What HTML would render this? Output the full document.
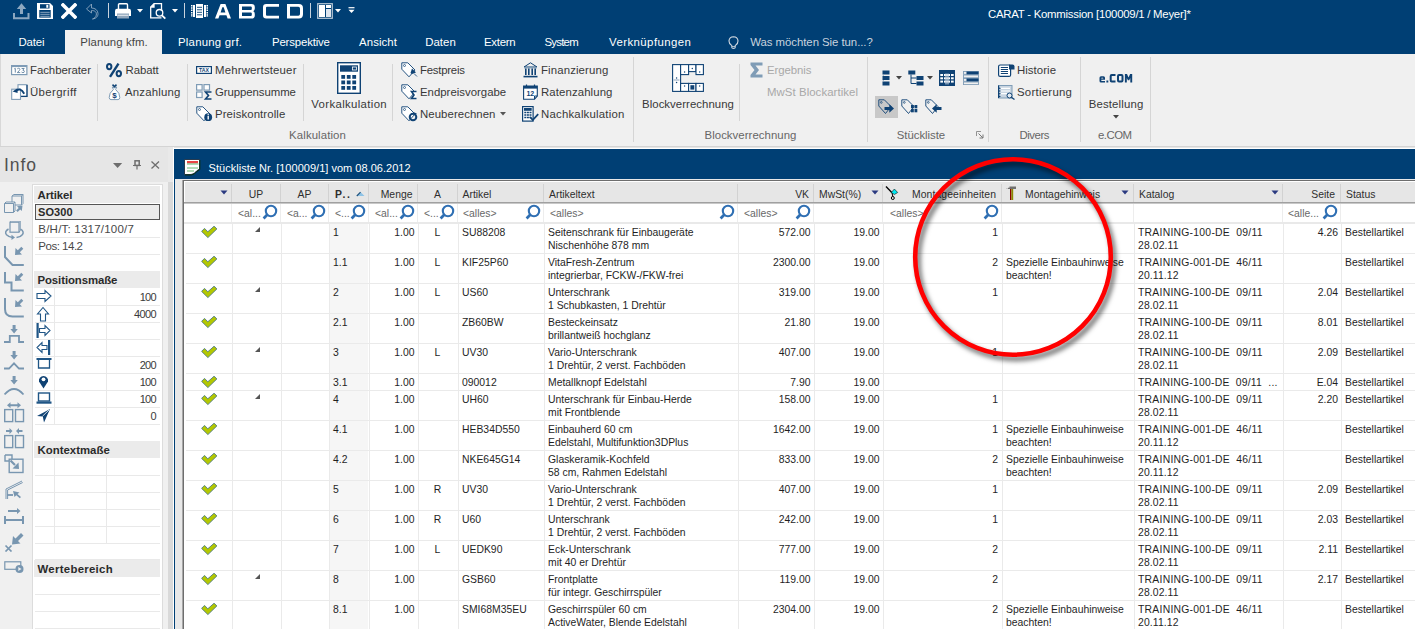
<!DOCTYPE html>
<html><head><meta charset="utf-8"><title>CARAT</title>
<style>
html,body{margin:0;padding:0;width:1415px;height:629px;overflow:hidden;background:#E6E6E6;}
body{position:relative;font-family:"Liberation Sans",sans-serif;}
.t{position:absolute;white-space:pre;line-height:1;}
.r{position:absolute;}
</style></head><body>
<div class="r" style="left:0px;top:0px;width:1415px;height:54px;background:#003F74;"></div>
<div class="t" style="top:9px;font-size:11.4px;color:#FFFFFF;left:988px;letter-spacing:-0.256px;">CARAT - Kommission [100009/1 / Meyer]*</div>
<div class="r" style="left:65px;top:30px;width:97px;height:24px;background:#F0F0F0;"></div>
<div class="t" style="top:37px;font-size:11.4px;color:#FFFFFF;left:18.5px;letter-spacing:-0.153px;">Datei</div>
<div class="t" style="top:37px;font-size:11.4px;color:#444444;left:80.3px;letter-spacing:0.088px;">Planung kfm.</div>
<div class="t" style="top:37px;font-size:11.4px;color:#FFFFFF;left:178px;letter-spacing:0.229px;">Planung grf.</div>
<div class="t" style="top:37px;font-size:11.4px;color:#FFFFFF;left:272px;letter-spacing:-0.156px;">Perspektive</div>
<div class="t" style="top:37px;font-size:11.4px;color:#FFFFFF;left:359px;letter-spacing:0.103px;">Ansicht</div>
<div class="t" style="top:37px;font-size:11.4px;color:#FFFFFF;left:425.2px;letter-spacing:0.045px;">Daten</div>
<div class="t" style="top:37px;font-size:11.4px;color:#FFFFFF;left:484px;letter-spacing:-0.250px;">Extern</div>
<div class="t" style="top:37px;font-size:11.4px;color:#FFFFFF;left:544.5px;letter-spacing:-0.762px;">System</div>
<div class="t" style="top:37px;font-size:11.4px;color:#FFFFFF;left:609px;letter-spacing:0.442px;">Verknüpfungen</div>
<div class="t" style="top:37px;font-size:11.4px;color:#C9D3DE;left:750.3px;letter-spacing:-0.053px;">Was möchten Sie tun...?</div>
<svg class="r" style="left:13px;top:3px;" width="17" height="17" viewBox="0 0 17 17"><path d="M3.8 6 L8.5 0.2 L13.2 6 L10 6 L10 11 L7 11 L7 6 L4 6 Z" fill="#8CA7C0" transform="translate(0,0)"/><path d="M1 10 L1 15.2 L15.5 15.2 L15.5 10" fill="none" stroke="#8CA7C0" stroke-width="2"/></svg>
<svg class="r" style="left:37px;top:3px;" width="16" height="16" viewBox="0 0 16 16"><path d="M0 0 H13 L16 3 V16 H0 Z" fill="#fff"/><rect x="3" y="1.2" width="9.5" height="4.3" fill="#003E73"/><rect x="9.3" y="1.8" width="2" height="3" fill="#fff"/><rect x="2.3" y="7" width="11.4" height="7.6" fill="#003E73"/><path d="M3.3 9.3 H12.7 M3.3 11.3 H12.7 M3.3 13.3 H12.7" stroke="#9DB3C8" stroke-width="0.9"/></svg>
<svg class="r" style="left:61px;top:3px;" width="16" height="16" viewBox="0 0 16 16"><path d="M2 2 L14 14 M14 2 L2 14" stroke="#fff" stroke-width="3.6" stroke-linecap="square"/></svg>
<svg class="r" style="left:85px;top:3px;" width="14" height="17" viewBox="0 0 14 17"><path d="M6.5 1 L1.5 6 L6.5 10 L6.5 7.5 C10 7.5 11.8 9 11.3 12 C10.9 14 9.5 15.3 7.5 16 C11.5 15.5 13.2 13 13 10.5 C12.8 7 10 5 6.5 5 Z" fill="none" stroke="#8CA7C0" stroke-width="0.9"/></svg>
<div class="r" style="left:108px;top:3px;width:1px;height:15px;background:#C8D3DE;"></div>
<div class="r" style="left:184px;top:3px;width:1px;height:15px;background:#C8D3DE;"></div>
<div class="r" style="left:310px;top:3px;width:1px;height:15px;background:#C8D3DE;"></div>
<svg class="r" style="left:115px;top:3px;" width="17" height="16" viewBox="0 0 17 16"><rect x="3.5" y="0.7" width="9" height="7" rx="1" fill="none" stroke="#fff" stroke-width="1.4"/><path d="M0 8 Q0 5.8 2 5.8 H14 Q16 5.8 16 8 V13 H0 Z" fill="#fff"/><rect x="2" y="10.5" width="12" height="5" fill="#8FA6BC"/><path d="M2.5 12.3 H13.5" stroke="#fff" stroke-width="0.8"/></svg>
<svg class="r" style="left:137px;top:9px;" width="6" height="4" viewBox="0 0 6 4"><path d="M0 0 H6 L3 3.5 Z" fill="#fff"/></svg>
<svg class="r" style="left:172px;top:9px;" width="6" height="4" viewBox="0 0 6 4"><path d="M0 0 H6 L3 3.5 Z" fill="#fff"/></svg>
<svg class="r" style="left:335px;top:9px;" width="6" height="4" viewBox="0 0 6 4"><path d="M0 0 H6 L3 3.5 Z" fill="#fff"/></svg>
<svg class="r" style="left:150px;top:3px;" width="17" height="17" viewBox="0 0 17 17"><path d="M4 0.7 H11.5 V8 M11.5 14.8 H0.7 V4 L4 0.7 V4 H0.7" fill="none" stroke="#fff" stroke-width="1.3"/><path d="M0.7 4 L4 0.7 L4 4 Z" fill="#fff"/><circle cx="9.5" cy="9.8" r="3.3" fill="none" stroke="#fff" stroke-width="1.3"/><path d="M12 12.3 L15.3 15.6" stroke="#fff" stroke-width="1.8"/></svg>
<svg class="r" style="left:191px;top:4px;" width="17" height="14" viewBox="0 0 17 14"><rect x="5" y="0" width="7" height="14" fill="#fff"/><path d="M0.7 1 V13" stroke="#fff" stroke-width="1.6" stroke-dasharray="1.5 0.8"/><path d="M16.3 1 V13" stroke="#fff" stroke-width="1.6" stroke-dasharray="1.5 0.8"/><rect x="2" y="1" width="2" height="12" fill="#fff"/><rect x="13" y="1" width="2" height="12" fill="#fff"/><path d="M6 3.3 H11 M6 5.8 H11 M6 8.3 H11 M6 10.8 H11" stroke="#003E73" stroke-width="0.9"/></svg>
<svg class="r" style="left:215.3px;top:3.7px;" width="17" height="16" viewBox="0 0 17 16"><path d="M0 14.5 L5.6 0 H10.4 L16 14.5 H12.6 L11.4 11.3 H4.6 L3.4 14.5 Z M5.6 8.6 H10.4 L8.7 3.2 H7.3 Z" fill="#fff" fill-rule="evenodd"/></svg>
<svg class="r" style="left:239px;top:3.7px;" width="17" height="16" viewBox="0 0 17 16"><path d="M0 0 H12.6 Q15.8 0 15.8 3.1 V4.6 Q15.8 6.5 14.3 7.2 Q15.8 8 15.8 10 V11.4 Q15.8 14.5 12.6 14.5 H0 Z M3 2.6 H11.8 Q12.8 2.6 12.8 3.6 V5 Q12.8 6 11.8 6 H3 Z M3 8.5 H11.8 Q12.8 8.5 12.8 9.5 V10.9 Q12.8 11.9 11.8 11.9 H3 Z" fill="#fff" fill-rule="evenodd"/></svg>
<svg class="r" style="left:263px;top:3.7px;" width="17" height="16" viewBox="0 0 17 16"><path d="M3.2 0 H16 V2.7 H4 Q3 2.7 3 3.7 V10.8 Q3 11.8 4 11.8 H16 V14.5 H3.2 Q0 14.5 0 11.3 V3.2 Q0 0 3.2 0 Z" fill="#fff" fill-rule="evenodd"/></svg>
<svg class="r" style="left:287px;top:3.7px;" width="17" height="16" viewBox="0 0 17 16"><path d="M0 0 H11.8 Q16 0 16 4.2 V10.3 Q16 14.5 11.8 14.5 H0 Z M3 2.7 H11.3 Q13 2.7 13 4.4 V10.1 Q13 11.8 11.3 11.8 H3 Z" fill="#fff" fill-rule="evenodd"/></svg>
<svg class="r" style="left:317px;top:3px;" width="16" height="16" viewBox="0 0 16 16"><rect x="0.7" y="0.7" width="14.6" height="14.6" fill="none" stroke="#B9C8D6" stroke-width="1.2"/><rect x="2" y="2" width="6" height="12" fill="#fff"/><rect x="9" y="2" width="5" height="3" fill="#fff"/><rect x="9" y="6" width="5" height="8" fill="#DDE5EE"/></svg>
<svg class="r" style="left:348px;top:7px;" width="7" height="7" viewBox="0 0 7 7"><path d="M0.5 0.7 H6.5" stroke="#fff" stroke-width="1.2"/><path d="M0.5 2.8 H6.5 L3.5 6 Z" fill="#fff"/></svg>
<div class="r" style="left:0px;top:54px;width:1415px;height:92px;background:#F0F0F0;"></div>
<div class="r" style="left:0px;top:146px;width:1415px;height:1px;background:#D4D4D4;"></div>
<div class="r" style="left:0px;top:54px;width:1px;height:92px;background:#D8D8D8;"></div>
<div class="r" style="left:97px;top:64px;width:1px;height:57px;background:#D5D5D5;"></div>
<div class="r" style="left:187px;top:64px;width:1px;height:57px;background:#D5D5D5;"></div>
<div class="r" style="left:303px;top:64px;width:1px;height:57px;background:#D5D5D5;"></div>
<div class="r" style="left:392px;top:64px;width:1px;height:57px;background:#D5D5D5;"></div>
<div class="r" style="left:739px;top:64px;width:1px;height:57px;background:#D5D5D5;"></div>
<div class="r" style="left:633px;top:57px;width:1px;height:85px;background:#D5D5D5;"></div>
<div class="r" style="left:867px;top:57px;width:1px;height:85px;background:#D5D5D5;"></div>
<div class="r" style="left:988px;top:57px;width:1px;height:85px;background:#D5D5D5;"></div>
<div class="r" style="left:1080px;top:57px;width:1px;height:85px;background:#D5D5D5;"></div>
<div class="r" style="left:1150px;top:57px;width:1px;height:85px;background:#D5D5D5;"></div>
<div class="t" style="top:65px;font-size:11.4px;color:#383838;left:30px;letter-spacing:-0.046px;">Fachberater</div>
<div class="t" style="top:87px;font-size:11.4px;color:#383838;left:30px;letter-spacing:0.362px;">Übergriff</div>
<div class="t" style="top:65px;font-size:11.4px;color:#383838;left:125.5px;letter-spacing:-0.078px;">Rabatt</div>
<div class="t" style="top:87px;font-size:11.4px;color:#383838;left:125px;letter-spacing:0.190px;">Anzahlung</div>
<div class="t" style="top:65px;font-size:11.4px;color:#383838;left:215px;letter-spacing:0.177px;">Mehrwertsteuer</div>
<div class="t" style="top:87px;font-size:11.4px;color:#383838;left:215px;letter-spacing:-0.067px;">Gruppensumme</div>
<div class="t" style="top:109px;font-size:11.4px;color:#383838;left:215px;letter-spacing:0.095px;">Preiskontrolle</div>
<div class="t" style="top:99px;font-size:11.4px;color:#383838;left:49.17008365384618px;width:600px;text-align:center;letter-spacing:0.340px;">Vorkalkulation</div>
<div class="t" style="top:65px;font-size:11.4px;color:#383838;left:420px;letter-spacing:-0.235px;">Festpreis</div>
<div class="t" style="top:87px;font-size:11.4px;color:#383838;left:420px;letter-spacing:0.001px;">Endpreisvorgabe</div>
<div class="t" style="top:109px;font-size:11.4px;color:#383838;left:420px;letter-spacing:0.064px;">Neuberechnen</div>
<div class="t" style="top:65px;font-size:11.4px;color:#383838;left:541px;letter-spacing:0.127px;">Finanzierung</div>
<div class="t" style="top:87px;font-size:11.4px;color:#383838;left:541px;letter-spacing:0.104px;">Ratenzahlung</div>
<div class="t" style="top:109px;font-size:11.4px;color:#383838;left:541px;letter-spacing:0.209px;">Nachkalkulation</div>
<div class="t" style="top:99px;font-size:11.4px;color:#383838;left:388.02497447916664px;width:600px;text-align:center;letter-spacing:0.050px;">Blockverrechnung</div>
<div class="t" style="top:65px;font-size:11.4px;color:#A8A8A8;left:767px;letter-spacing:-0.071px;">Ergebnis</div>
<div class="t" style="top:87px;font-size:11.4px;color:#A8A8A8;left:767px;letter-spacing:0.065px;">MwSt Blockartikel</div>
<div class="t" style="top:65px;font-size:11.4px;color:#383838;left:1017px;letter-spacing:0.051px;">Historie</div>
<div class="t" style="top:87px;font-size:11.4px;color:#383838;left:1017px;letter-spacing:0.267px;">Sortierung</div>
<div class="t" style="top:99px;font-size:11.4px;color:#383838;left:816.0812519097221px;width:600px;text-align:center;letter-spacing:0.163px;">Bestellung</div>
<div class="t" style="top:130px;font-size:11.4px;color:#666666;left:17.551488749999976px;width:600px;text-align:center;letter-spacing:0.103px;">Kalkulation</div>
<div class="t" style="top:130px;font-size:11.4px;color:#666666;left:450.52497447916664px;width:600px;text-align:center;letter-spacing:0.050px;">Blockverrechnung</div>
<div class="t" style="top:130px;font-size:11.4px;color:#666666;left:620.9786576388889px;width:600px;text-align:center;letter-spacing:-0.043px;">Stückliste</div>
<div class="t" style="top:130px;font-size:11.4px;color:#666666;left:734.2697921874999px;width:600px;text-align:center;letter-spacing:-0.460px;">Divers</div>
<div class="t" style="top:130px;font-size:11.4px;color:#666666;left:814.7370249999999px;width:600px;text-align:center;letter-spacing:-0.526px;">e.COM</div>
<svg class="r" style="left:11px;top:65px;" width="17" height="11" viewBox="0 0 17 11"><rect x="0.6" y="0.6" width="15.3" height="9" fill="none" stroke="#7F9CB6" stroke-width="1.2"/><rect x="0.6" y="0.6" width="15.3" height="1.6" fill="#7F9CB6"/><rect x="1.5" y="2.3" width="13.5" height="6.6" fill="#fff"/><path d="M3.3 3.8 L4.3 3.3 V7.6 M6.2 4 Q6.7 3.3 7.6 3.3 Q8.9 3.3 8.9 4.5 Q8.9 5.4 6.2 7.6 H9.2 M10.6 3.5 H13.2 L11.8 5.2 Q13.4 5.2 13.4 6.4 Q13.4 7.6 12 7.6 Q11 7.6 10.5 7" fill="none" stroke="#6F8DA8" stroke-width="1"/></svg>
<svg class="r" style="left:11px;top:84px;" width="17" height="16" viewBox="0 0 17 16"><rect x="7" y="0.7" width="9" height="11.8" fill="#fff" stroke="#7F9CB6" stroke-width="1.1"/><path d="M16 1 V12.3 H10" fill="none" stroke="#0F4274" stroke-width="1.2"/><rect x="0.7" y="5.2" width="8.8" height="10.2" fill="#fff" stroke="#7F9CB6" stroke-width="1.1"/><path d="M5 7 Q9.5 2.8 13.2 9.8" fill="none" stroke="#0F4274" stroke-width="1.9"/><path d="M1.6 7.6 L6.4 4.3 L6.6 9 Z" fill="#0F4274"/></svg>
<svg class="r" style="left:106px;top:63px;" width="17" height="15" viewBox="0 0 17 15"><ellipse cx="3.2" cy="3.6" rx="2.2" ry="2.6" fill="none" stroke="#0F4274" stroke-width="2"/><ellipse cx="12.8" cy="10.6" rx="2.2" ry="2.6" fill="none" stroke="#0F4274" stroke-width="2"/><path d="M12.5 0.6 L4 13.8" stroke="#0F4274" stroke-width="2.4"/></svg>
<svg class="r" style="left:108px;top:84px;" width="13" height="17" viewBox="0 0 13 17"><path d="M4.2 3 Q6.5 4.6 8.8 3 L7.6 5.5 Q12 9 11.8 13.5 Q11.7 15.6 10 15.6 H3 Q1.3 15.6 1.2 13.5 Q1 9 5.4 5.5 Z" fill="#fff" stroke="#7F9CB6" stroke-width="1"/><path d="M4.5 0.6 L6.5 2.6 L8.5 0.6" fill="none" stroke="#0F4274" stroke-width="1.5"/><text x="6.5" y="13.6" font-family="Liberation Sans" font-weight="700" font-size="8" fill="#0F4274" text-anchor="middle">$</text></svg>
<svg class="r" style="left:196px;top:66px;" width="16" height="8" viewBox="0 0 16 8"><rect x="0.6" y="0.6" width="14.8" height="6.8" fill="#fff" stroke="#0F4274" stroke-width="1.2"/><text x="8" y="6.4" font-family="Liberation Sans" font-weight="700" font-size="5.8" fill="#0F4274" text-anchor="middle" textLength="10" lengthAdjust="spacingAndGlyphs">TAX</text></svg>
<svg class="r" style="left:196px;top:84px;" width="17" height="16" viewBox="0 0 17 16"><rect x="0.6" y="0.6" width="5.5" height="5.5" fill="#fff" stroke="#7F9CB6" stroke-width="1.2"/><rect x="8" y="0.6" width="5.5" height="5.5" fill="#fff" stroke="#7F9CB6" stroke-width="1.2"/><rect x="0.6" y="8" width="5.5" height="5.5" fill="#fff" stroke="#7F9CB6" stroke-width="1.2"/><path d="M15.5 8 H9.5 L12.5 11.5 L9.5 15 H15.5" fill="none" stroke="#0F4274" stroke-width="1.6"/></svg>
<svg class="r" style="left:196px;top:106px;" width="17" height="16" viewBox="0 0 17 16"><path d="M0.8 0.8 H6.8 L14 8 L8 14.8 L0.8 7.2 Z" fill="#fff" stroke="#0F4274" stroke-width="0.9" stroke-linejoin="round"/><circle cx="3.5" cy="3.5" r="1" fill="none" stroke="#0F4274" stroke-width="0.7"/><circle cx="12.2" cy="11.2" r="3.9" fill="#0F4274"/><path d="M12.2 9.8 V13.6" stroke="#fff" stroke-width="1.4"/><circle cx="12.2" cy="8.5" r="0.7" fill="#fff"/></svg>
<svg class="r" style="left:401px;top:62px;" width="17" height="16" viewBox="0 0 17 16"><path d="M0.8 0.8 H6.8 L14 8 L8 14.8 L0.8 7.2 Z" fill="#fff" stroke="#0F4274" stroke-width="0.9" stroke-linejoin="round"/><circle cx="3.5" cy="3.5" r="1" fill="none" stroke="#0F4274" stroke-width="0.7"/><path d="M9.5 11 L11 6.5 L15 10.5 L10.8 12 Z" fill="#0F4274"/><path d="M13 11.5 L16 14.5" stroke="#0F4274" stroke-width="0.8"/></svg>
<svg class="r" style="left:401px;top:84px;" width="17" height="16" viewBox="0 0 17 16"><path d="M0.8 0.8 H6.8 L14 8 L8 14.8 L0.8 7.2 Z" fill="#fff" stroke="#0F4274" stroke-width="0.9" stroke-linejoin="round"/><circle cx="3.5" cy="3.5" r="1" fill="none" stroke="#0F4274" stroke-width="0.7"/><path d="M15.5 7.5 H10.5 L13 11 L10.5 14.5 H15.5" fill="#fff" stroke="#0F4274" stroke-width="1.6"/></svg>
<svg class="r" style="left:401px;top:106px;" width="17" height="16" viewBox="0 0 17 16"><path d="M0.8 0.8 H6.8 L14 8 L8 14.8 L0.8 7.2 Z" fill="#fff" stroke="#0F4274" stroke-width="0.9" stroke-linejoin="round"/><circle cx="3.5" cy="3.5" r="1" fill="none" stroke="#0F4274" stroke-width="0.7"/><circle cx="12" cy="11" r="3.3" fill="none" stroke="#0F4274" stroke-width="2"/><path d="M13 6.2 L16 7.7 L13.5 9.5 Z" fill="#0F4274"/></svg>
<svg class="r" style="left:523px;top:62px;" width="15" height="16" viewBox="0 0 15 16"><path d="M7.5 0.8 L14 5 H1 Z" fill="none" stroke="#0F4274" stroke-width="1"/><rect x="1" y="5" width="13" height="1.4" fill="#7F9CB6"/><path d="M2.8 6.5 V13 M5.8 6.5 V13 M9.2 6.5 V13 M12.2 6.5 V13" stroke="#0F4274" stroke-width="1.6"/><rect x="0.5" y="13.8" width="14" height="1.6" fill="#0F4274"/></svg>
<svg class="r" style="left:523px;top:84px;" width="15" height="16" viewBox="0 0 15 16"><path d="M0.6 2 H14.3 V12 L11.5 15.2 H0.6 Z" fill="#fff" stroke="#0F4274" stroke-width="1.1"/><rect x="0.6" y="2" width="13.7" height="2.6" fill="#0F4274"/><path d="M3.5 0.5 V3 M11.5 0.5 V3" stroke="#0F4274" stroke-width="1.2"/><text x="7.3" y="11.8" font-family="Liberation Sans" font-weight="700" font-size="7" fill="#0F4274" text-anchor="middle">12</text><path d="M11.5 15.2 V12 H14.3" fill="none" stroke="#0F4274" stroke-width="1"/></svg>
<svg class="r" style="left:522px;top:106px;" width="17" height="16" viewBox="0 0 17 16"><rect x="0.6" y="0.6" width="10.5" height="14.5" fill="#fff" stroke="#0F4274" stroke-width="1.2"/><rect x="2" y="2" width="7.7" height="2.8" fill="#0F4274"/><path d="M2.3 6.5 H9.5 M2.3 9 H9.5 M2.3 11.5 H9.5" stroke="#0F4274" stroke-width="1.4" stroke-dasharray="2 0.6"/><path d="M8 11 L10.8 14 L16.2 8.2" fill="none" stroke="#0F4274" stroke-width="1.8"/></svg>
<svg class="r" style="left:337px;top:62px;" width="24" height="32" viewBox="0 0 24 32"><rect x="0.7" y="0.7" width="22.6" height="30.6" fill="#fff" stroke="#0F4274" stroke-width="1.4"/><rect x="3" y="3.3" width="18" height="6.4" fill="#0F4274"/><rect x="15.5" y="5" width="4" height="3" fill="none" stroke="#fff" stroke-width="0.8"/><rect x="4.3" y="13.0" width="3.8" height="3.8" fill="#0F4274"/><rect x="4.3" y="18.5" width="3.8" height="3.8" fill="#0F4274"/><rect x="4.3" y="24.0" width="3.8" height="3.8" fill="#0F4274"/><rect x="9.8" y="13.0" width="3.8" height="3.8" fill="#0F4274"/><rect x="9.8" y="18.5" width="3.8" height="3.8" fill="#0F4274"/><rect x="9.8" y="24.0" width="3.8" height="3.8" fill="#0F4274"/><rect x="15.3" y="13.0" width="3.8" height="3.8" fill="#0F4274"/><rect x="15.3" y="18.5" width="3.8" height="3.8" fill="#0F4274"/><rect x="15.3" y="24.0" width="3.8" height="3.8" fill="#0F4274"/></svg>
<svg class="r" style="left:672px;top:64px;" width="32" height="28" viewBox="0 0 32 28"><g fill="#fff" stroke="#0F4274" stroke-width="1.1"><rect x="0.6" y="0.6" width="8" height="26.8"/><rect x="8.6" y="0.6" width="8" height="10"/><rect x="16.6" y="0.6" width="7.4" height="7"/><rect x="24" y="0.6" width="7.4" height="10"/><rect x="8.6" y="19.4" width="8" height="8"/><rect x="16.6" y="19.4" width="7.4" height="8"/><rect x="24" y="19.4" width="7.4" height="8"/></g><rect x="18.4" y="21.2" width="3.9" height="4.4" fill="#0F4274"/><path d="M1.5 16 H7.5" stroke="#9FB3C6" stroke-width="1.2"/><g fill="#0F4274"><circle cx="4.6" cy="14" r="0.7"/><circle cx="4.6" cy="18.5" r="0.7"/><circle cx="12.6" cy="8" r="0.7"/><circle cx="27.7" cy="8" r="0.7"/><circle cx="20.3" cy="4.5" r="0.7"/><circle cx="12.6" cy="22" r="0.7"/><circle cx="27.7" cy="22" r="0.7"/></g></svg>
<svg class="r" style="left:750px;top:62px;" width="13" height="16" viewBox="0 0 13 16"><path d="M0.5 0.5 H12.5 V3.5 H5.5 L9 8 L5.5 12.5 H12.5 V15.5 H0.5 V13 L4.5 8 L0.5 3 Z" fill="#7F9CB6"/></svg>
<svg class="r" style="left:882px;top:70px;" width="8" height="16" viewBox="0 0 8 16"><g fill="#0F4274"><rect x="0.5" y="0.5" width="7" height="4"/><rect x="0.5" y="6" width="7" height="4"/><rect x="0.5" y="11.5" width="7" height="4"/></g><path d="M1.3 4.5 V6 M1.3 10 V11.5" stroke="#7F9CB6" stroke-width="0.8"/></svg>
<svg class="r" style="left:895.5px;top:75.5px;" width="6" height="4" viewBox="0 0 6 4"><path d="M0 0 H6 L3 3.5 Z" fill="#444"/></svg>
<svg class="r" style="left:908px;top:70px;" width="16" height="16" viewBox="0 0 16 16"><g fill="#0F4274"><rect x="0.3" y="0.5" width="7" height="4"/><rect x="8.5" y="6" width="7" height="4"/><rect x="8.5" y="11.5" width="7" height="4"/></g><path d="M3 4.5 V13.5 H8.5 M3 8 H8.5" fill="none" stroke="#0F4274" stroke-width="1"/></svg>
<svg class="r" style="left:926.5px;top:75.5px;" width="6" height="4" viewBox="0 0 6 4"><path d="M0 0 H6 L3 3.5 Z" fill="#444"/></svg>
<svg class="r" style="left:939px;top:70px;" width="16" height="16" viewBox="0 0 16 16"><rect x="0" y="0" width="16" height="16" fill="#0F4274"/><g fill="#fff"><rect x="1.3" y="4" width="13.4" height="2"/><rect x="1.3" y="7.3" width="13.4" height="2"/><rect x="1.3" y="10.6" width="13.4" height="2"/></g><path d="M4.5 3.5 V14.5 M11.5 3.5 V14.5" stroke="#0F4274" stroke-width="1"/><rect x="6" y="3.5" width="4" height="11" fill="#B9C8D8" opacity="0.6"/></svg>
<svg class="r" style="left:963px;top:71px;" width="16" height="14" viewBox="0 0 16 14"><g fill="none" stroke="#7F9CB6" stroke-width="0.9"><rect x="0.5" y="0.5" width="15" height="2.8"/><rect x="0.5" y="4" width="15" height="2.8"/><rect x="0.5" y="7.5" width="15" height="2.8"/><rect x="0.5" y="11" width="15" height="2.6"/></g><rect x="3.5" y="0.5" width="12" height="2.8" fill="#0F4274"/><rect x="3.5" y="7.5" width="12" height="2.8" fill="#0F4274"/></svg>
<div class="r" style="left:875px;top:96px;width:23px;height:22px;background:#C8C8C8;"></div>
<svg class="r" style="left:878px;top:99px;" width="17" height="16" viewBox="0 0 17 16"><path d="M0.8 0.8 H6.3 L13 7.5 L7.5 14.5 L0.8 7 Z" fill="none" stroke="#0F4274" stroke-width="0.9" stroke-linejoin="round"/><circle cx="3.3" cy="3.4" r="0.9" fill="none" stroke="#0F4274" stroke-width="0.7"/><path d="M6.5 8 H11.3 V5.3 L16 9.5 L11.3 13.7 V11 H6.5 Z" fill="#0F4274"/></svg>
<svg class="r" style="left:901px;top:99px;" width="17" height="16" viewBox="0 0 17 16"><path d="M0.8 0.8 H6.3 L13 7.5 L7.5 14.5 L0.8 7 Z" fill="none" stroke="#0F4274" stroke-width="0.9" stroke-linejoin="round"/><circle cx="3.3" cy="3.4" r="0.9" fill="none" stroke="#0F4274" stroke-width="0.7"/><g fill="#0F4274"><rect x="10" y="6" width="2.8" height="3.3"/><rect x="13.5" y="6" width="2.8" height="3.3"/><rect x="10" y="10" width="2.8" height="3.3"/><rect x="13.5" y="10" width="2.8" height="3.3"/></g></svg>
<svg class="r" style="left:925px;top:99px;" width="17" height="16" viewBox="0 0 17 16"><path d="M0.8 0.8 H6.3 L13 7.5 L7.5 14.5 L0.8 7 Z" fill="none" stroke="#0F4274" stroke-width="0.9" stroke-linejoin="round"/><circle cx="3.3" cy="3.4" r="0.9" fill="none" stroke="#0F4274" stroke-width="0.7"/><path d="M16.5 8 H11.7 V5.3 L7 9.5 L11.7 13.7 V11 H16.5 Z" fill="#0F4274"/></svg>
<svg class="r" style="left:976px;top:131px;" width="8" height="8" viewBox="0 0 8 8"><path d="M0.5 0.5 H5 M0.5 0.5 V5" stroke="#888" stroke-width="0.9" fill="none"/><path d="M2.5 2.5 L7 7 M7 3.5 V7 H3.5" stroke="#777" stroke-width="1" fill="none"/></svg>
<svg class="r" style="left:998px;top:64px;" width="17" height="13" viewBox="0 0 17 13"><rect x="0.6" y="1" width="12" height="11.4" rx="1.5" fill="#fff" stroke="#0F4274" stroke-width="1.2"/><path d="M11 0.5 H14.5 Q16.5 0.5 16.5 2.5 V5.5 H11 Z" fill="#0F4274"/><path d="M2.8 3.5 H10 M2.8 5.5 H10 M2.8 7.5 H10 M2.8 9.5 H10" stroke="#0F4274" stroke-width="1"/></svg>
<svg class="r" style="left:998px;top:85px;" width="18" height="15" viewBox="0 0 18 15"><rect x="0.5" y="0.5" width="13.5" height="12.5" fill="#C9D5E1" stroke="#7F9CB6" stroke-width="1"/><path d="M0.5 0.5 V13" stroke="#0F4274" stroke-width="1.4"/><path d="M3 3.3 H12 M3 6 H12 M3 8.7 H9" stroke="#fff" stroke-width="1.2"/><g fill="#0F4274"><path d="M1 2.5 L3 3.3 L1 4.1Z"/><path d="M1 5.2 L3 6 L1 6.8Z"/><path d="M1 7.9 L3 8.7 L1 9.5Z"/><path d="M1 10.6 L3 11.4 L1 12.2Z"/></g><circle cx="11.5" cy="10.5" r="2.5" fill="#E4EAF0" stroke="#0F4274" stroke-width="1"/><path d="M13.3 12.3 L16.5 14.5" stroke="#0F4274" stroke-width="1.3"/></svg>
<svg class="r" style="left:1099px;top:73.6px;" width="35" height="10" viewBox="0 0 35 10"><path fill="#0F4274" fill-rule="evenodd" d="M6 5.8 H2.3 V6.6 Q2.3 6.9 2.6 6.9 H6 V8.6 H2 Q0.5 8.6 0.5 7 V3.8 Q0.5 2.2 2 2.2 H4.5 Q6 2.2 6 3.8 Z M2.3 4.5 H4.2 V3.9 Q4.2 3.7 4 3.7 H2.6 Q2.3 3.7 2.3 3.9 Z M7.4 6.6 H9.3 V8.6 H7.4 Z M10.7 2 Q10.7 0 12.7 0 H16.5 V2 H13 Q12.7 2 12.7 2.3 V6.3 Q12.7 6.6 13 6.6 H16.5 V8.6 H12.7 Q10.7 8.6 10.7 6.6 Z M18 2 Q18 0 20 0 H22.5 Q24.5 0 24.5 2 V6.6 Q24.5 8.6 22.5 8.6 H20 Q18 8.6 18 6.6 Z M20 2.3 V6.3 Q20 6.6 20.3 6.6 H22.2 Q22.5 6.6 22.5 6.3 V2.3 Q22.5 2 22.2 2 H20.3 Q20 2 20 2.3 Z M25.9 8.6 V0 H28 L29.55 3.6 L31.1 0 H33.2 V8.6 H31.3 V4 L30.2 6.3 H28.9 L27.8 4 V8.6 Z"/></svg>
<svg class="r" style="left:1113px;top:115px;" width="6" height="4" viewBox="0 0 6 4"><path d="M0 0 H6 L3 3.5 Z" fill="#444"/></svg>
<svg class="r" style="left:500px;top:112px;" width="6" height="4" viewBox="0 0 6 4"><path d="M0 0 H6 L3 3.5 Z" fill="#555"/></svg>
<div class="r" style="left:0px;top:147px;width:1415px;height:482px;background:#E6E6E6;"></div>
<div class="t" style="top:157px;font-size:17.5px;color:#505050;left:4px;letter-spacing:0.937px;">Info</div>
<svg class="r" style="left:113px;top:163px;" width="10" height="6" viewBox="0 0 10 6"><path d="M0 0 H9.2 L4.6 5 Z" fill="#6E6E6E"/></svg>
<svg class="r" style="left:133px;top:160px;" width="8" height="10" viewBox="0 0 8 10"><rect x="2" y="0.8" width="4.2" height="4.6" fill="none" stroke="#6E6E6E" stroke-width="1.5"/><path d="M0 5.5 H8 M4 5.5 V9.5" stroke="#6E6E6E" stroke-width="1.2"/></svg>
<svg class="r" style="left:151px;top:161px;" width="9" height="8" viewBox="0 0 9 8"><path d="M0.5 0.5 L8 7.5 M8 0.5 L0.5 7.5" stroke="#6E6E6E" stroke-width="1.3"/></svg>
<div class="r" style="left:0px;top:182px;width:168px;height:447px;background:#F0F0F0;"></div>
<div class="r" style="left:168px;top:147px;width:5px;height:35px;background:#E9E9E9;"></div>
<div class="r" style="left:168px;top:182px;width:5px;height:447px;background:#D9D9D9;"></div>
<div class="r" style="left:173px;top:147px;width:1px;height:482px;background:#FAFAFA;"></div>
<div class="r" style="left:32px;top:184px;width:131px;height:445px;background:#DCDCDC;"></div>
<div class="r" style="left:33px;top:185px;width:129px;height:444px;background:#FFFFFF;"></div>
<div class="r" style="left:34px;top:186px;width:126px;height:17px;background:#EBEBEB;"></div>
<div class="t" style="top:190px;font-size:11.4px;color:#2A2A2A;font-weight:700;left:37.5px;letter-spacing:-0.080px;">Artikel</div>
<div class="r" style="left:35px;top:204px;width:125px;height:16px;background:#555555;"></div>
<div class="r" style="left:36px;top:205px;width:123px;height:14px;background:#EBEBEB;"></div>
<div class="t" style="top:207px;font-size:11px;color:#2A2A2A;font-weight:700;left:38px;letter-spacing:0.063px;">SO300</div>
<div class="r" style="left:35px;top:237px;width:125px;height:1px;background:#E9E9E9;"></div>
<div class="r" style="left:35px;top:254px;width:125px;height:1px;background:#E9E9E9;"></div>
<div class="t" style="top:224px;font-size:11.5px;color:#484848;left:38.3px;letter-spacing:0.221px;">B/H/T: 1317/100/7</div>
<div class="t" style="top:241px;font-size:11.5px;color:#484848;left:38.3px;letter-spacing:-0.486px;">Pos: 14.2</div>
<div class="r" style="left:34px;top:271px;width:126px;height:17px;background:#EBEBEB;"></div>
<div class="t" style="top:275px;font-size:11.4px;color:#2A2A2A;font-weight:700;left:37.5px;letter-spacing:-0.091px;">Positionsmaße</div>
<div class="r" style="left:35px;top:305px;width:125px;height:1px;background:#E9E9E9;"></div>
<div class="t" style="top:292px;font-size:11px;color:#3A3A3A;right:1259.276578125px;letter-spacing:-0.777px;">100</div>
<div class="r" style="left:35px;top:322px;width:125px;height:1px;background:#E9E9E9;"></div>
<div class="t" style="top:309px;font-size:11px;color:#3A3A3A;right:1259.1902916666668px;letter-spacing:-0.690px;">4000</div>
<div class="r" style="left:35px;top:339px;width:125px;height:1px;background:#E9E9E9;"></div>
<div class="r" style="left:35px;top:356px;width:125px;height:1px;background:#E9E9E9;"></div>
<div class="r" style="left:35px;top:373px;width:125px;height:1px;background:#E9E9E9;"></div>
<div class="t" style="top:360px;font-size:11px;color:#3A3A3A;right:1259.276578125px;letter-spacing:-0.777px;">200</div>
<div class="r" style="left:35px;top:390px;width:125px;height:1px;background:#E9E9E9;"></div>
<div class="t" style="top:377px;font-size:11px;color:#3A3A3A;right:1259.276578125px;letter-spacing:-0.777px;">100</div>
<div class="r" style="left:35px;top:407px;width:125px;height:1px;background:#E9E9E9;"></div>
<div class="t" style="top:394px;font-size:11px;color:#3A3A3A;right:1259.276578125px;letter-spacing:-0.777px;">100</div>
<div class="r" style="left:35px;top:424px;width:125px;height:1px;background:#E9E9E9;"></div>
<div class="t" style="top:411px;font-size:11px;color:#3A3A3A;right:1258.5px;">0</div>
<div class="r" style="left:54px;top:288px;width:1px;height:136px;background:#E9E9E9;"></div>
<div class="r" style="left:106px;top:288px;width:1px;height:136px;background:#E9E9E9;"></div>
<div class="r" style="left:34px;top:441px;width:126px;height:17px;background:#EBEBEB;"></div>
<div class="t" style="top:445px;font-size:11.4px;color:#2A2A2A;font-weight:700;left:37.5px;letter-spacing:0.009px;">Kontextmaße</div>
<div class="r" style="left:35px;top:475px;width:125px;height:1px;background:#E9E9E9;"></div>
<div class="r" style="left:35px;top:492px;width:125px;height:1px;background:#E9E9E9;"></div>
<div class="r" style="left:35px;top:509px;width:125px;height:1px;background:#E9E9E9;"></div>
<div class="r" style="left:35px;top:526px;width:125px;height:1px;background:#E9E9E9;"></div>
<div class="r" style="left:35px;top:543px;width:125px;height:1px;background:#E9E9E9;"></div>
<div class="r" style="left:54px;top:458px;width:1px;height:85px;background:#E9E9E9;"></div>
<div class="r" style="left:106px;top:458px;width:1px;height:85px;background:#E9E9E9;"></div>
<div class="r" style="left:35px;top:559px;width:125px;height:1px;background:#E9E9E9;"></div>
<div class="r" style="left:34px;top:560px;width:126px;height:17px;background:#EBEBEB;"></div>
<div class="t" style="top:564px;font-size:11.4px;color:#2A2A2A;font-weight:700;left:37.5px;letter-spacing:0.289px;">Wertebereich</div>
<div class="r" style="left:35px;top:594px;width:125px;height:1px;background:#E9E9E9;"></div>
<div class="r" style="left:35px;top:611px;width:125px;height:1px;background:#E9E9E9;"></div>
<div class="r" style="left:35px;top:628px;width:125px;height:1px;background:#E9E9E9;"></div>
<svg class="r" style="left:36px;top:289px;" width="16" height="16" viewBox="0 0 16 16"><path d="M1 4.5 H9 V1.5 L15 7 L9 12.5 V9.5 H1 Z" fill="#fff" stroke="#1F5585" stroke-width="1.1"/></svg>
<svg class="r" style="left:36px;top:306px;" width="16" height="16" viewBox="0 0 16 16"><path d="M4.5 15 V8 H1.5 L7 1.5 L12.5 8 H9.5 V15 Z" fill="#fff" stroke="#1F5585" stroke-width="1.1"/></svg>
<svg class="r" style="left:36px;top:323px;" width="16" height="16" viewBox="0 0 16 16"><rect x="0.5" y="0" width="2.2" height="15" fill="#1F5585"/><path d="M3.5 5.5 H9 V2.5 L14 7.5 L9 12.5 V9.5 H3.5 Z" fill="#fff" stroke="#1F5585" stroke-width="1.1"/></svg>
<svg class="r" style="left:36px;top:340px;" width="16" height="16" viewBox="0 0 16 16"><rect x="12" y="0" width="2.2" height="15" fill="#1F5585"/><path d="M11 5.5 H6 V2.5 L1 7.5 L6 12.5 V9.5 H11 Z" fill="#fff" stroke="#1F5585" stroke-width="1.1"/></svg>
<svg class="r" style="left:36px;top:357px;" width="16" height="16" viewBox="0 0 16 16"><rect x="0.5" y="1" width="15" height="2" fill="#1F5585"/><path d="M2.5 3 V11 H13.5 V3" fill="none" stroke="#1F5585" stroke-width="1.3"/></svg>
<svg class="r" style="left:36px;top:374px;" width="16" height="16" viewBox="0 0 16 16"><path d="M7.5 14.5 L3 7.5 A4.6 4.6 0 1 1 12 7.5 Z" fill="#0F4274"/><circle cx="7.5" cy="5.3" r="1.9" fill="#fff"/></svg>
<svg class="r" style="left:36px;top:391px;" width="16" height="16" viewBox="0 0 16 16"><rect x="2.5" y="2" width="11" height="8" fill="none" stroke="#1F5585" stroke-width="1.4"/><rect x="0.5" y="10.5" width="15" height="2.2" fill="#1F5585"/></svg>
<svg class="r" style="left:36px;top:408px;" width="16" height="16" viewBox="0 0 16 16"><path d="M14 1 L1 8 L6.8 8.6 L8 14.5 Z" fill="#0F4274"/><path d="M6.5 8.2 L13 2" stroke="#fff" stroke-width="0.8"/></svg>
<svg class="r" style="left:4px;top:194px;" width="21" height="21" viewBox="0 0 21 21"><path d="M8 2 L10 0.5 H19 V9.5 L17.5 11 H8 Z M8 2 H17.5 V11 M17.5 2 L19 0.5" fill="none" stroke="#7896B0" stroke-width="1"/><path d="M0.5 9.5 L2 8 H11 V17 L9.5 18.5 H0.5 Z M0.5 9.5 H9.5 V18.5 M9.5 9.5 L11 8" fill="#F0F0F0" stroke="#7896B0" stroke-width="1"/><path d="M18.5 11.5 L17.8 17 L16.2 15.4 L13.6 18 L12.1 16.5 L14.7 13.9 L13 12.2 Z" fill="#7896B0"/></svg>
<svg class="r" style="left:4px;top:221px;" width="21" height="21" viewBox="0 0 21 21"><rect x="6" y="1.2" width="9" height="10" fill="none" stroke="#7896B0" stroke-width="1.2"/><path d="M6 1.2 L7.5 0 H16.2 V9.8 L15 11.2" fill="none" stroke="#7896B0" stroke-width="1"/><path d="M4.5 8 Q0 10.5 2.5 13.8 Q5 16.3 8.5 16.5 M12.5 16.6 Q16.5 16.2 18.5 13.5 Q20.5 10.5 16.5 8.2" fill="none" stroke="#7896B0" stroke-width="1.5"/><path d="M7.5 13.8 L11 16.5 L7.5 19 Z" fill="#7896B0"/></svg>
<svg class="r" style="left:4px;top:246px;" width="21" height="21" viewBox="0 0 21 21"><path d="M1 0 V11 L8.5 19 H19.8" fill="none" stroke="#7896B0" stroke-width="2"/><path d="M11 9 L11.5 2 L13.8 4.3 L17.3 0.8 L19.3 2.8 L15.8 6.3 L18 8.5 Z" fill="#7896B0"/></svg>
<svg class="r" style="left:4px;top:272px;" width="21" height="21" viewBox="0 0 21 21"><path d="M1 0 V10.5 H7.5 V18.5 H19.8" fill="none" stroke="#7896B0" stroke-width="2"/><path d="M11 9 L11.5 2 L13.8 4.3 L17.3 0.8 L19.3 2.8 L15.8 6.3 L18 8.5 Z" fill="#7896B0"/></svg>
<svg class="r" style="left:4px;top:298px;" width="21" height="21" viewBox="0 0 21 21"><path d="M1 0 V11 Q1 18.5 8.5 18.5 H19.8" fill="none" stroke="#7896B0" stroke-width="2"/><path d="M11 9 L11.5 2 L13.8 4.3 L17.3 0.8 L19.3 2.8 L15.8 6.3 L18 8.5 Z" fill="#7896B0"/></svg>
<svg class="r" style="left:4px;top:325px;" width="21" height="21" viewBox="0 0 21 21"><path d="M0 17 H5.8 V10.9 H15 V17 H20" fill="none" stroke="#7896B0" stroke-width="1.8"/><path d="M8.6 0 H11.6 V4 H13.8 L10.1 8.6 L6.4 4 H8.6 Z" fill="#7896B0"/></svg>
<svg class="r" style="left:4px;top:351px;" width="21" height="21" viewBox="0 0 21 21"><path d="M0 17.5 H5 L10 12.3 L15 17.5 H20" fill="none" stroke="#7896B0" stroke-width="1.8"/><path d="M8.6 0 H11.6 V4 H13.8 L10.1 8.6 L6.4 4 H8.6 Z" fill="#7896B0"/></svg>
<svg class="r" style="left:4px;top:376px;" width="21" height="21" viewBox="0 0 21 21"><path d="M0.5 18.5 Q10 7.5 19.5 18.5" fill="none" stroke="#7896B0" stroke-width="1.8"/><path d="M8.6 0 H11.6 V4 H13.8 L10.1 8.6 L6.4 4 H8.6 Z" fill="#7896B0"/></svg>
<svg class="r" style="left:4px;top:402px;" width="21" height="21" viewBox="0 0 21 21"><rect x="0.7" y="7.6" width="8" height="12" fill="none" stroke="#7896B0" stroke-width="1.4"/><rect x="11.5" y="7.6" width="8" height="12" fill="none" stroke="#7896B0" stroke-width="1.4"/><path d="M3 3.2 L6.5 0.2 V2.2 H13.5 V0.2 L17 3.2 L13.5 6.2 V4.2 H6.5 V6.2 Z" fill="#7896B0"/></svg>
<svg class="r" style="left:4px;top:428px;" width="21" height="21" viewBox="0 0 21 21"><rect x="0.7" y="7.6" width="8" height="12" fill="none" stroke="#7896B0" stroke-width="1.4"/><rect x="11.5" y="7.6" width="8" height="12" fill="none" stroke="#7896B0" stroke-width="1.4"/><path d="M2 2 H5.5 V0 L8.5 3 L5.5 6 V4 H2 Z M18.5 2 H15 V0 L12 3 L15 6 V4 H18.5 Z" fill="#7896B0"/></svg>
<svg class="r" style="left:4px;top:454px;" width="21" height="21" viewBox="0 0 21 21"><path d="M1 1 H8 V5" fill="none" stroke="#7896B0" stroke-width="1.4"/><path d="M1 1 V7 H5" fill="none" stroke="#7896B0" stroke-width="1.4"/><rect x="5.2" y="5.2" width="13.8" height="13.3" fill="none" stroke="#7896B0" stroke-width="1.4"/><path d="M6.5 6.5 L11 11" stroke="#7896B0" stroke-width="2.2"/><path d="M15 15 L8.5 14.5 L14.5 8.5 Z" fill="#7896B0"/></svg>
<svg class="r" style="left:4px;top:480px;" width="21" height="21" viewBox="0 0 21 21"><path d="M2 19 V9 L18 1 M3.6 19 V10 L18.7 2.5" fill="none" stroke="#7896B0" stroke-width="1"/><path d="M3 15 H9" stroke="#7896B0" stroke-width="1.8"/><path d="M9 11 L15.5 12.5 L13.5 14 L17 17 L15.8 18.2 L12.3 15.2 L10.5 17 Z" fill="#7896B0"/></svg>
<svg class="r" style="left:4px;top:508px;" width="21" height="21" viewBox="0 0 21 21"><path d="M1 8 V16 M19 8 V16 M1 12 H19" fill="none" stroke="#7896B0" stroke-width="2"/><path d="M4 2 H13 V0 L16.5 3 L13 6 V4 H4 Z" fill="#7896B0"/></svg>
<svg class="r" style="left:4px;top:531px;" width="21" height="21" viewBox="0 0 21 21"><path d="M1.5 14.5 L7.5 20.5 M7.5 14.5 L1.5 20.5" stroke="#7896B0" stroke-width="1.7"/><path d="M8 13.5 L9 5 L11.5 7.5 L17 2 L19.5 4.5 L14 10 L16.5 12.5 Z" fill="#7896B0"/></svg>
<svg class="r" style="left:4px;top:561px;" width="21" height="21" viewBox="0 0 21 21"><rect x="0.8" y="0.8" width="16" height="7.5" fill="none" stroke="#7896B0" stroke-width="1.2"/><circle cx="15.5" cy="8" r="4" fill="#7896B0"/><path d="M14.3 6 L17.5 8 L14.3 10 Z" fill="#F0F0F0"/></svg>
<div class="r" style="left:173px;top:148px;width:1242px;height:481px;background:#FFFFFF;"></div>
<div class="r" style="left:174px;top:149px;width:1241px;height:480px;background:#003F74;"></div>
<div class="t" style="top:163px;font-size:11px;color:#FFFFFF;left:208.6px;letter-spacing:0.021px;">Stückliste Nr. [100009/1] vom 08.06.2012</div>
<div class="r" style="left:175px;top:179px;width:1240px;height:450px;background:#E8E8E8;"></div>
<div class="r" style="left:183px;top:180px;width:1232px;height:449px;background:#FFFFFF;border-left:1px solid #888;border-top:1px solid #666;"></div>

<div class="r" style="left:183px;top:180px;width:1232px;height:1px;background:#6E6E6E;"></div>
<div class="r" style="left:183px;top:180px;width:1px;height:449px;background:#6E6E6E;"></div>
<div class="r" style="left:182px;top:180px;width:1px;height:449px;background:#A8A8A8;"></div>
<div class="r" style="left:184px;top:181px;width:1231px;height:1px;background:#FFFFFF;"></div>
<div class="r" style="left:185px;top:182px;width:1230px;height:20px;background:#E6E6E6;"></div>
<div class="r" style="left:184px;top:181px;width:1px;height:448px;background:#FFFFFF;"></div>
<div class="r" style="left:184px;top:202px;width:1231px;height:1px;background:#A0A0A0;"></div>
<div class="r" style="left:184px;top:203px;width:1231px;height:1px;background:#C8C8C8;"></div>
<div class="r" style="left:231px;top:184px;width:1px;height:18px;background:#D2D2D2;"></div>
<div class="r" style="left:280px;top:184px;width:1px;height:18px;background:#D2D2D2;"></div>
<div class="r" style="left:328px;top:184px;width:1px;height:18px;background:#D2D2D2;"></div>
<div class="r" style="left:368px;top:184px;width:1px;height:18px;background:#D2D2D2;"></div>
<div class="r" style="left:417px;top:184px;width:1px;height:18px;background:#D2D2D2;"></div>
<div class="r" style="left:457px;top:184px;width:1px;height:18px;background:#D2D2D2;"></div>
<div class="r" style="left:543px;top:184px;width:1px;height:18px;background:#D2D2D2;"></div>
<div class="r" style="left:737px;top:184px;width:1px;height:18px;background:#D2D2D2;"></div>
<div class="r" style="left:813px;top:184px;width:1px;height:18px;background:#D2D2D2;"></div>
<div class="r" style="left:882px;top:184px;width:1px;height:18px;background:#D2D2D2;"></div>
<div class="r" style="left:1001px;top:184px;width:1px;height:18px;background:#D2D2D2;"></div>
<div class="r" style="left:1133px;top:184px;width:1px;height:18px;background:#D2D2D2;"></div>
<div class="r" style="left:1282px;top:184px;width:1px;height:18px;background:#D2D2D2;"></div>
<div class="r" style="left:1340px;top:184px;width:1px;height:18px;background:#D2D2D2;"></div>
<div class="r" style="left:184px;top:204px;width:1231px;height:18px;background:#FFFFFF;"></div>
<div class="r" style="left:184px;top:222px;width:1231px;height:2px;background:#E9E9E9;"></div>
<div class="r" style="left:231px;top:204px;width:1px;height:18px;background:#EDEDED;"></div>
<div class="r" style="left:280px;top:204px;width:1px;height:18px;background:#EDEDED;"></div>
<div class="r" style="left:328px;top:204px;width:1px;height:18px;background:#EDEDED;"></div>
<div class="r" style="left:368px;top:204px;width:1px;height:18px;background:#EDEDED;"></div>
<div class="r" style="left:417px;top:204px;width:1px;height:18px;background:#EDEDED;"></div>
<div class="r" style="left:457px;top:204px;width:1px;height:18px;background:#EDEDED;"></div>
<div class="r" style="left:543px;top:204px;width:1px;height:18px;background:#EDEDED;"></div>
<div class="r" style="left:737px;top:204px;width:1px;height:18px;background:#EDEDED;"></div>
<div class="r" style="left:813px;top:204px;width:1px;height:18px;background:#EDEDED;"></div>
<div class="r" style="left:882px;top:204px;width:1px;height:18px;background:#EDEDED;"></div>
<div class="r" style="left:1001px;top:204px;width:1px;height:18px;background:#EDEDED;"></div>
<div class="r" style="left:1133px;top:204px;width:1px;height:18px;background:#EDEDED;"></div>
<div class="r" style="left:1282px;top:204px;width:1px;height:18px;background:#EDEDED;"></div>
<div class="r" style="left:1340px;top:204px;width:1px;height:18px;background:#EDEDED;"></div>
<div class="t" style="top:190px;font-size:10.4px;color:#2E2E2E;left:-44px;width:600px;text-align:center;">UP</div>
<div class="t" style="top:190px;font-size:10.4px;color:#2E2E2E;left:4.5px;width:600px;text-align:center;">AP</div>
<div class="t" style="top:190px;font-size:10.4px;color:#2E2E2E;font-weight:700;left:335px;letter-spacing:1.812px;">P..</div>
<div class="t" style="top:190px;font-size:10.4px;color:#2E2E2E;right:1002.5px;">Menge</div>
<div class="t" style="top:190px;font-size:10.4px;color:#2E2E2E;left:137.5px;width:600px;text-align:center;">A</div>
<div class="t" style="top:190px;font-size:10.4px;color:#2E2E2E;left:462.5px;">Artikel</div>
<div class="t" style="top:190px;font-size:10.4px;color:#2E2E2E;left:549px;">Artikeltext</div>
<div class="t" style="top:190px;font-size:10.4px;color:#2E2E2E;right:606px;">VK</div>
<div class="t" style="top:190px;font-size:10.4px;color:#2E2E2E;left:819px;">MwSt(%)</div>
<div class="t" style="top:190px;font-size:10.4px;color:#2E2E2E;left:912px;letter-spacing:0.087px;">Montageeinheiten</div>
<div class="t" style="top:190px;font-size:10.4px;color:#2E2E2E;left:1025px;">Montagehinweis</div>
<div class="t" style="top:190px;font-size:10.4px;color:#2E2E2E;left:1139px;">Katalog</div>
<div class="t" style="top:190px;font-size:10.4px;color:#2E2E2E;right:80px;">Seite</div>
<div class="t" style="top:190px;font-size:10.4px;color:#2E2E2E;left:1346px;">Status</div>
<svg class="r" style="left:220px;top:190px;" width="8" height="5" viewBox="0 0 8 5"><path d="M0.5 0.5 L7.5 0.5 L4 4.5 Z" fill="#2B3A80"/></svg>
<svg class="r" style="left:871px;top:190px;" width="8" height="5" viewBox="0 0 8 5"><path d="M0.5 0.5 L7.5 0.5 L4 4.5 Z" fill="#2B3A80"/></svg>
<svg class="r" style="left:1121px;top:190px;" width="8" height="5" viewBox="0 0 8 5"><path d="M0.5 0.5 L7.5 0.5 L4 4.5 Z" fill="#2B3A80"/></svg>
<svg class="r" style="left:1271px;top:190px;" width="8" height="5" viewBox="0 0 8 5"><path d="M0.5 0.5 L7.5 0.5 L4 4.5 Z" fill="#2B3A80"/></svg>
<svg class="r" style="left:356px;top:191px;" width="9" height="6" viewBox="0 0 9 6"><path d="M0.5 5 L4.5 1 L8.5 5 Z" fill="#8EC3E6"/><path d="M0.8 5 L4.5 1.2" stroke="#1F4F78" stroke-width="1.1"/></svg>
<div class="t" style="top:209px;font-size:10.4px;color:#686868;left:238px;">&lt;al...</div>
<svg class="r" style="left:262px;top:204px;" width="17" height="17" viewBox="0 0 17 17"><circle cx="9" cy="7" r="5.2" fill="none" stroke="#2F6FB3" stroke-width="2.1"/><path d="M5.4 10.6 L1.6 14.4" stroke="#2F6FB3" stroke-width="2.8"/></svg>
<div class="t" style="top:209px;font-size:10.4px;color:#686868;left:287px;">&lt;a...</div>
<svg class="r" style="left:310px;top:204px;" width="17" height="17" viewBox="0 0 17 17"><circle cx="9" cy="7" r="5.2" fill="none" stroke="#2F6FB3" stroke-width="2.1"/><path d="M5.4 10.6 L1.6 14.4" stroke="#2F6FB3" stroke-width="2.8"/></svg>
<div class="t" style="top:209px;font-size:10.4px;color:#686868;left:335px;">&lt;...</div>
<svg class="r" style="left:350px;top:204px;" width="17" height="17" viewBox="0 0 17 17"><circle cx="9" cy="7" r="5.2" fill="none" stroke="#2F6FB3" stroke-width="2.1"/><path d="M5.4 10.6 L1.6 14.4" stroke="#2F6FB3" stroke-width="2.8"/></svg>
<div class="t" style="top:209px;font-size:10.4px;color:#686868;left:375px;">&lt;al...</div>
<svg class="r" style="left:399px;top:204px;" width="17" height="17" viewBox="0 0 17 17"><circle cx="9" cy="7" r="5.2" fill="none" stroke="#2F6FB3" stroke-width="2.1"/><path d="M5.4 10.6 L1.6 14.4" stroke="#2F6FB3" stroke-width="2.8"/></svg>
<div class="t" style="top:209px;font-size:10.4px;color:#686868;left:424px;">&lt;...</div>
<svg class="r" style="left:439px;top:204px;" width="17" height="17" viewBox="0 0 17 17"><circle cx="9" cy="7" r="5.2" fill="none" stroke="#2F6FB3" stroke-width="2.1"/><path d="M5.4 10.6 L1.6 14.4" stroke="#2F6FB3" stroke-width="2.8"/></svg>
<div class="t" style="top:209px;font-size:10.4px;color:#686868;left:463px;">&lt;alles&gt;</div>
<svg class="r" style="left:525px;top:204px;" width="17" height="17" viewBox="0 0 17 17"><circle cx="9" cy="7" r="5.2" fill="none" stroke="#2F6FB3" stroke-width="2.1"/><path d="M5.4 10.6 L1.6 14.4" stroke="#2F6FB3" stroke-width="2.8"/></svg>
<div class="t" style="top:209px;font-size:10.4px;color:#686868;left:550px;">&lt;alles&gt;</div>
<svg class="r" style="left:719px;top:204px;" width="17" height="17" viewBox="0 0 17 17"><circle cx="9" cy="7" r="5.2" fill="none" stroke="#2F6FB3" stroke-width="2.1"/><path d="M5.4 10.6 L1.6 14.4" stroke="#2F6FB3" stroke-width="2.8"/></svg>
<div class="t" style="top:209px;font-size:10.4px;color:#686868;left:744px;">&lt;alles&gt;</div>
<svg class="r" style="left:795px;top:204px;" width="17" height="17" viewBox="0 0 17 17"><circle cx="9" cy="7" r="5.2" fill="none" stroke="#2F6FB3" stroke-width="2.1"/><path d="M5.4 10.6 L1.6 14.4" stroke="#2F6FB3" stroke-width="2.8"/></svg>
<div class="t" style="top:209px;font-size:10.4px;color:#686868;left:890px;">&lt;alles&gt;</div>
<svg class="r" style="left:983px;top:204px;" width="17" height="17" viewBox="0 0 17 17"><circle cx="9" cy="7" r="5.2" fill="none" stroke="#2F6FB3" stroke-width="2.1"/><path d="M5.4 10.6 L1.6 14.4" stroke="#2F6FB3" stroke-width="2.8"/></svg>
<div class="t" style="top:209px;font-size:10.4px;color:#686868;left:1288px;">&lt;alle...</div>
<svg class="r" style="left:1322px;top:204px;" width="17" height="17" viewBox="0 0 17 17"><circle cx="9" cy="7" r="5.2" fill="none" stroke="#2F6FB3" stroke-width="2.1"/><path d="M5.4 10.6 L1.6 14.4" stroke="#2F6FB3" stroke-width="2.8"/></svg>
<div class="r" style="left:330px;top:224px;width:38px;height:405px;background:#F6F6F6;"></div>
<div class="r" style="left:186px;top:253px;width:1229px;height:1px;background:#EAEAEA;"></div>
<svg class="r" style="left:201px;top:226px;" width="17" height="13" viewBox="0 0 17 13"><path d="M0.6 5.4 L3.5 2.4 L6.8 5.8 L13.1 0.2 L15.9 2.9 L6.9 11.6 Z" fill="#B3C700" stroke="#4F7A86" stroke-width="0.9" stroke-linejoin="round"/></svg>
<svg class="r" style="left:255px;top:227px;" width="6" height="6" viewBox="0 0 6 6"><path d="M0 5 L5 0 L5 5 Z" fill="#555"/></svg>
<div class="t" style="top:228px;font-size:10.4px;color:#1F1F1F;left:333px;">1</div>
<div class="t" style="top:228px;font-size:10.4px;color:#1F1F1F;right:1000.5px;">1.00</div>
<div class="t" style="top:228px;font-size:10.4px;color:#1F1F1F;left:137.5px;width:600px;text-align:center;">L</div>
<div class="t" style="top:228px;font-size:10.4px;color:#1F1F1F;left:462px;">SU88208</div>
<div class="t" style="top:228px;font-size:10.4px;color:#1F1F1F;left:548px;">Seitenschrank für Einbaugeräte</div>
<div class="t" style="top:241px;font-size:10.4px;color:#1F1F1F;left:548px;">Nischenhöhe 878 mm</div>
<div class="t" style="top:228px;font-size:10.4px;color:#1F1F1F;right:604.5px;">572.00</div>
<div class="t" style="top:228px;font-size:10.4px;color:#1F1F1F;right:535.5px;">19.00</div>
<div class="t" style="top:228px;font-size:10.4px;color:#1F1F1F;right:417px;">1</div>
<div class="t" style="top:228px;font-size:10.4px;color:#1F1F1F;left:1138px;letter-spacing:0.245px;">TRAINING-100-DE  09/11</div>
<div class="t" style="top:241px;font-size:10.4px;color:#1F1F1F;left:1138px;letter-spacing:0.113px;">28.02.11</div>
<div class="t" style="top:228px;font-size:10.4px;color:#1F1F1F;right:77px;">4.26</div>
<div class="t" style="top:228px;font-size:10.4px;color:#1F1F1F;left:1345px;">Bestellartikel</div>
<div class="r" style="left:186px;top:283px;width:1229px;height:1px;background:#EAEAEA;"></div>
<svg class="r" style="left:201px;top:256px;" width="17" height="13" viewBox="0 0 17 13"><path d="M0.6 5.4 L3.5 2.4 L6.8 5.8 L13.1 0.2 L15.9 2.9 L6.9 11.6 Z" fill="#B3C700" stroke="#4F7A86" stroke-width="0.9" stroke-linejoin="round"/></svg>
<div class="t" style="top:258px;font-size:10.4px;color:#1F1F1F;left:333px;">1.1</div>
<div class="t" style="top:258px;font-size:10.4px;color:#1F1F1F;right:1000.5px;">1.00</div>
<div class="t" style="top:258px;font-size:10.4px;color:#1F1F1F;left:137.5px;width:600px;text-align:center;">L</div>
<div class="t" style="top:258px;font-size:10.4px;color:#1F1F1F;left:462px;">KIF25P60</div>
<div class="t" style="top:258px;font-size:10.4px;color:#1F1F1F;left:548px;">VitaFresh-Zentrum</div>
<div class="t" style="top:271px;font-size:10.4px;color:#1F1F1F;left:548px;">integrierbar, FCKW-/FKW-frei</div>
<div class="t" style="top:258px;font-size:10.4px;color:#1F1F1F;right:604.5px;">2300.00</div>
<div class="t" style="top:258px;font-size:10.4px;color:#1F1F1F;right:535.5px;">19.00</div>
<div class="t" style="top:258px;font-size:10.4px;color:#1F1F1F;right:417px;">2</div>
<div class="t" style="top:258px;font-size:10.4px;color:#1F1F1F;left:1006px;">Spezielle Einbauhinweise</div>
<div class="t" style="top:271px;font-size:10.4px;color:#1F1F1F;left:1006px;">beachten!</div>
<div class="t" style="top:258px;font-size:10.4px;color:#1F1F1F;left:1138px;letter-spacing:0.245px;">TRAINING-001-DE  46/11</div>
<div class="t" style="top:271px;font-size:10.4px;color:#1F1F1F;left:1138px;letter-spacing:0.113px;">20.11.12</div>
<div class="t" style="top:258px;font-size:10.4px;color:#1F1F1F;left:1345px;">Bestellartikel</div>
<div class="r" style="left:186px;top:313px;width:1229px;height:1px;background:#EAEAEA;"></div>
<svg class="r" style="left:201px;top:286px;" width="17" height="13" viewBox="0 0 17 13"><path d="M0.6 5.4 L3.5 2.4 L6.8 5.8 L13.1 0.2 L15.9 2.9 L6.9 11.6 Z" fill="#B3C700" stroke="#4F7A86" stroke-width="0.9" stroke-linejoin="round"/></svg>
<svg class="r" style="left:255px;top:287px;" width="6" height="6" viewBox="0 0 6 6"><path d="M0 5 L5 0 L5 5 Z" fill="#555"/></svg>
<div class="t" style="top:288px;font-size:10.4px;color:#1F1F1F;left:333px;">2</div>
<div class="t" style="top:288px;font-size:10.4px;color:#1F1F1F;right:1000.5px;">1.00</div>
<div class="t" style="top:288px;font-size:10.4px;color:#1F1F1F;left:137.5px;width:600px;text-align:center;">L</div>
<div class="t" style="top:288px;font-size:10.4px;color:#1F1F1F;left:462px;">US60</div>
<div class="t" style="top:288px;font-size:10.4px;color:#1F1F1F;left:548px;">Unterschrank</div>
<div class="t" style="top:301px;font-size:10.4px;color:#1F1F1F;left:548px;">1 Schubkasten, 1 Drehtür</div>
<div class="t" style="top:288px;font-size:10.4px;color:#1F1F1F;right:604.5px;">319.00</div>
<div class="t" style="top:288px;font-size:10.4px;color:#1F1F1F;right:535.5px;">19.00</div>
<div class="t" style="top:288px;font-size:10.4px;color:#1F1F1F;right:417px;">1</div>
<div class="t" style="top:288px;font-size:10.4px;color:#1F1F1F;left:1138px;letter-spacing:0.245px;">TRAINING-100-DE  09/11</div>
<div class="t" style="top:301px;font-size:10.4px;color:#1F1F1F;left:1138px;letter-spacing:0.113px;">28.02.11</div>
<div class="t" style="top:288px;font-size:10.4px;color:#1F1F1F;right:77px;">2.04</div>
<div class="t" style="top:288px;font-size:10.4px;color:#1F1F1F;left:1345px;">Bestellartikel</div>
<div class="r" style="left:186px;top:343px;width:1229px;height:1px;background:#EAEAEA;"></div>
<svg class="r" style="left:201px;top:316px;" width="17" height="13" viewBox="0 0 17 13"><path d="M0.6 5.4 L3.5 2.4 L6.8 5.8 L13.1 0.2 L15.9 2.9 L6.9 11.6 Z" fill="#B3C700" stroke="#4F7A86" stroke-width="0.9" stroke-linejoin="round"/></svg>
<div class="t" style="top:318px;font-size:10.4px;color:#1F1F1F;left:333px;">2.1</div>
<div class="t" style="top:318px;font-size:10.4px;color:#1F1F1F;right:1000.5px;">1.00</div>
<div class="t" style="top:318px;font-size:10.4px;color:#1F1F1F;left:462px;">ZB60BW</div>
<div class="t" style="top:318px;font-size:10.4px;color:#1F1F1F;left:548px;">Besteckeinsatz</div>
<div class="t" style="top:331px;font-size:10.4px;color:#1F1F1F;left:548px;">brillantweiß hochglanz</div>
<div class="t" style="top:318px;font-size:10.4px;color:#1F1F1F;right:604.5px;">21.80</div>
<div class="t" style="top:318px;font-size:10.4px;color:#1F1F1F;right:535.5px;">19.00</div>
<div class="t" style="top:318px;font-size:10.4px;color:#1F1F1F;left:1138px;letter-spacing:0.245px;">TRAINING-100-DE  09/11</div>
<div class="t" style="top:331px;font-size:10.4px;color:#1F1F1F;left:1138px;letter-spacing:0.113px;">28.02.11</div>
<div class="t" style="top:318px;font-size:10.4px;color:#1F1F1F;right:77px;">8.01</div>
<div class="t" style="top:318px;font-size:10.4px;color:#1F1F1F;left:1345px;">Bestellartikel</div>
<div class="r" style="left:186px;top:373px;width:1229px;height:1px;background:#EAEAEA;"></div>
<svg class="r" style="left:201px;top:346px;" width="17" height="13" viewBox="0 0 17 13"><path d="M0.6 5.4 L3.5 2.4 L6.8 5.8 L13.1 0.2 L15.9 2.9 L6.9 11.6 Z" fill="#B3C700" stroke="#4F7A86" stroke-width="0.9" stroke-linejoin="round"/></svg>
<svg class="r" style="left:255px;top:347px;" width="6" height="6" viewBox="0 0 6 6"><path d="M0 5 L5 0 L5 5 Z" fill="#555"/></svg>
<div class="t" style="top:348px;font-size:10.4px;color:#1F1F1F;left:333px;">3</div>
<div class="t" style="top:348px;font-size:10.4px;color:#1F1F1F;right:1000.5px;">1.00</div>
<div class="t" style="top:348px;font-size:10.4px;color:#1F1F1F;left:137.5px;width:600px;text-align:center;">L</div>
<div class="t" style="top:348px;font-size:10.4px;color:#1F1F1F;left:462px;">UV30</div>
<div class="t" style="top:348px;font-size:10.4px;color:#1F1F1F;left:548px;">Vario-Unterschrank</div>
<div class="t" style="top:361px;font-size:10.4px;color:#1F1F1F;left:548px;">1 Drehtür, 2 verst. Fachböden</div>
<div class="t" style="top:348px;font-size:10.4px;color:#1F1F1F;right:604.5px;">407.00</div>
<div class="t" style="top:348px;font-size:10.4px;color:#1F1F1F;right:535.5px;">19.00</div>
<div class="t" style="top:348px;font-size:10.4px;color:#1F1F1F;right:417px;">1</div>
<div class="t" style="top:348px;font-size:10.4px;color:#1F1F1F;left:1138px;letter-spacing:0.245px;">TRAINING-100-DE  09/11</div>
<div class="t" style="top:361px;font-size:10.4px;color:#1F1F1F;left:1138px;letter-spacing:0.113px;">28.02.11</div>
<div class="t" style="top:348px;font-size:10.4px;color:#1F1F1F;right:77px;">2.09</div>
<div class="t" style="top:348px;font-size:10.4px;color:#1F1F1F;left:1345px;">Bestellartikel</div>
<div class="r" style="left:186px;top:390px;width:1229px;height:1px;background:#EAEAEA;"></div>
<svg class="r" style="left:201px;top:376px;" width="17" height="13" viewBox="0 0 17 13"><path d="M0.6 5.4 L3.5 2.4 L6.8 5.8 L13.1 0.2 L15.9 2.9 L6.9 11.6 Z" fill="#B3C700" stroke="#4F7A86" stroke-width="0.9" stroke-linejoin="round"/></svg>
<div class="t" style="top:378px;font-size:10.4px;color:#1F1F1F;left:333px;">3.1</div>
<div class="t" style="top:378px;font-size:10.4px;color:#1F1F1F;right:1000.5px;">1.00</div>
<div class="t" style="top:378px;font-size:10.4px;color:#1F1F1F;left:462px;">090012</div>
<div class="t" style="top:378px;font-size:10.4px;color:#1F1F1F;left:548px;">Metallknopf Edelstahl</div>
<div class="t" style="top:378px;font-size:10.4px;color:#1F1F1F;right:604.5px;">7.90</div>
<div class="t" style="top:378px;font-size:10.4px;color:#1F1F1F;right:535.5px;">19.00</div>
<div class="t" style="top:378px;font-size:10.4px;color:#1F1F1F;left:1138px;letter-spacing:0.216px;">TRAINING-100-DE  09/11  ...</div>
<div class="t" style="top:378px;font-size:10.4px;color:#1F1F1F;right:77px;">E.04</div>
<div class="t" style="top:378px;font-size:10.4px;color:#1F1F1F;left:1345px;">Bestellartikel</div>
<div class="r" style="left:186px;top:420px;width:1229px;height:1px;background:#EAEAEA;"></div>
<svg class="r" style="left:201px;top:393px;" width="17" height="13" viewBox="0 0 17 13"><path d="M0.6 5.4 L3.5 2.4 L6.8 5.8 L13.1 0.2 L15.9 2.9 L6.9 11.6 Z" fill="#B3C700" stroke="#4F7A86" stroke-width="0.9" stroke-linejoin="round"/></svg>
<svg class="r" style="left:255px;top:394px;" width="6" height="6" viewBox="0 0 6 6"><path d="M0 5 L5 0 L5 5 Z" fill="#555"/></svg>
<div class="t" style="top:395px;font-size:10.4px;color:#1F1F1F;left:333px;">4</div>
<div class="t" style="top:395px;font-size:10.4px;color:#1F1F1F;right:1000.5px;">1.00</div>
<div class="t" style="top:395px;font-size:10.4px;color:#1F1F1F;left:462px;">UH60</div>
<div class="t" style="top:395px;font-size:10.4px;color:#1F1F1F;left:548px;">Unterschrank für Einbau-Herde</div>
<div class="t" style="top:408px;font-size:10.4px;color:#1F1F1F;left:548px;">mit Frontblende</div>
<div class="t" style="top:395px;font-size:10.4px;color:#1F1F1F;right:604.5px;">158.00</div>
<div class="t" style="top:395px;font-size:10.4px;color:#1F1F1F;right:535.5px;">19.00</div>
<div class="t" style="top:395px;font-size:10.4px;color:#1F1F1F;right:417px;">1</div>
<div class="t" style="top:395px;font-size:10.4px;color:#1F1F1F;left:1138px;letter-spacing:0.245px;">TRAINING-100-DE  09/11</div>
<div class="t" style="top:408px;font-size:10.4px;color:#1F1F1F;left:1138px;letter-spacing:0.113px;">28.02.11</div>
<div class="t" style="top:395px;font-size:10.4px;color:#1F1F1F;right:77px;">2.20</div>
<div class="t" style="top:395px;font-size:10.4px;color:#1F1F1F;left:1345px;">Bestellartikel</div>
<div class="r" style="left:186px;top:450px;width:1229px;height:1px;background:#EAEAEA;"></div>
<svg class="r" style="left:201px;top:423px;" width="17" height="13" viewBox="0 0 17 13"><path d="M0.6 5.4 L3.5 2.4 L6.8 5.8 L13.1 0.2 L15.9 2.9 L6.9 11.6 Z" fill="#B3C700" stroke="#4F7A86" stroke-width="0.9" stroke-linejoin="round"/></svg>
<div class="t" style="top:425px;font-size:10.4px;color:#1F1F1F;left:333px;">4.1</div>
<div class="t" style="top:425px;font-size:10.4px;color:#1F1F1F;right:1000.5px;">1.00</div>
<div class="t" style="top:425px;font-size:10.4px;color:#1F1F1F;left:462px;">HEB34D550</div>
<div class="t" style="top:425px;font-size:10.4px;color:#1F1F1F;left:548px;">Einbauherd 60 cm</div>
<div class="t" style="top:438px;font-size:10.4px;color:#1F1F1F;left:548px;">Edelstahl, Multifunktion3DPlus</div>
<div class="t" style="top:425px;font-size:10.4px;color:#1F1F1F;right:604.5px;">1642.00</div>
<div class="t" style="top:425px;font-size:10.4px;color:#1F1F1F;right:535.5px;">19.00</div>
<div class="t" style="top:425px;font-size:10.4px;color:#1F1F1F;right:417px;">1</div>
<div class="t" style="top:425px;font-size:10.4px;color:#1F1F1F;left:1006px;">Spezielle Einbauhinweise</div>
<div class="t" style="top:438px;font-size:10.4px;color:#1F1F1F;left:1006px;">beachten!</div>
<div class="t" style="top:425px;font-size:10.4px;color:#1F1F1F;left:1138px;letter-spacing:0.245px;">TRAINING-001-DE  46/11</div>
<div class="t" style="top:438px;font-size:10.4px;color:#1F1F1F;left:1138px;letter-spacing:0.113px;">20.11.12</div>
<div class="t" style="top:425px;font-size:10.4px;color:#1F1F1F;left:1345px;">Bestellartikel</div>
<div class="r" style="left:186px;top:480px;width:1229px;height:1px;background:#EAEAEA;"></div>
<svg class="r" style="left:201px;top:453px;" width="17" height="13" viewBox="0 0 17 13"><path d="M0.6 5.4 L3.5 2.4 L6.8 5.8 L13.1 0.2 L15.9 2.9 L6.9 11.6 Z" fill="#B3C700" stroke="#4F7A86" stroke-width="0.9" stroke-linejoin="round"/></svg>
<div class="t" style="top:455px;font-size:10.4px;color:#1F1F1F;left:333px;">4.2</div>
<div class="t" style="top:455px;font-size:10.4px;color:#1F1F1F;right:1000.5px;">1.00</div>
<div class="t" style="top:455px;font-size:10.4px;color:#1F1F1F;left:462px;">NKE645G14</div>
<div class="t" style="top:455px;font-size:10.4px;color:#1F1F1F;left:548px;">Glaskeramik-Kochfeld</div>
<div class="t" style="top:468px;font-size:10.4px;color:#1F1F1F;left:548px;">58 cm, Rahmen Edelstahl</div>
<div class="t" style="top:455px;font-size:10.4px;color:#1F1F1F;right:604.5px;">833.00</div>
<div class="t" style="top:455px;font-size:10.4px;color:#1F1F1F;right:535.5px;">19.00</div>
<div class="t" style="top:455px;font-size:10.4px;color:#1F1F1F;right:417px;">2</div>
<div class="t" style="top:455px;font-size:10.4px;color:#1F1F1F;left:1006px;">Spezielle Einbauhinweise</div>
<div class="t" style="top:468px;font-size:10.4px;color:#1F1F1F;left:1006px;">beachten!</div>
<div class="t" style="top:455px;font-size:10.4px;color:#1F1F1F;left:1138px;letter-spacing:0.245px;">TRAINING-001-DE  46/11</div>
<div class="t" style="top:468px;font-size:10.4px;color:#1F1F1F;left:1138px;letter-spacing:0.113px;">20.11.12</div>
<div class="t" style="top:455px;font-size:10.4px;color:#1F1F1F;left:1345px;">Bestellartikel</div>
<div class="r" style="left:186px;top:510px;width:1229px;height:1px;background:#EAEAEA;"></div>
<svg class="r" style="left:201px;top:483px;" width="17" height="13" viewBox="0 0 17 13"><path d="M0.6 5.4 L3.5 2.4 L6.8 5.8 L13.1 0.2 L15.9 2.9 L6.9 11.6 Z" fill="#B3C700" stroke="#4F7A86" stroke-width="0.9" stroke-linejoin="round"/></svg>
<div class="t" style="top:485px;font-size:10.4px;color:#1F1F1F;left:333px;">5</div>
<div class="t" style="top:485px;font-size:10.4px;color:#1F1F1F;right:1000.5px;">1.00</div>
<div class="t" style="top:485px;font-size:10.4px;color:#1F1F1F;left:137.5px;width:600px;text-align:center;">R</div>
<div class="t" style="top:485px;font-size:10.4px;color:#1F1F1F;left:462px;">UV30</div>
<div class="t" style="top:485px;font-size:10.4px;color:#1F1F1F;left:548px;">Vario-Unterschrank</div>
<div class="t" style="top:498px;font-size:10.4px;color:#1F1F1F;left:548px;">1 Drehtür, 2 verst. Fachböden</div>
<div class="t" style="top:485px;font-size:10.4px;color:#1F1F1F;right:604.5px;">407.00</div>
<div class="t" style="top:485px;font-size:10.4px;color:#1F1F1F;right:535.5px;">19.00</div>
<div class="t" style="top:485px;font-size:10.4px;color:#1F1F1F;right:417px;">1</div>
<div class="t" style="top:485px;font-size:10.4px;color:#1F1F1F;left:1138px;letter-spacing:0.245px;">TRAINING-100-DE  09/11</div>
<div class="t" style="top:498px;font-size:10.4px;color:#1F1F1F;left:1138px;letter-spacing:0.113px;">28.02.11</div>
<div class="t" style="top:485px;font-size:10.4px;color:#1F1F1F;right:77px;">2.09</div>
<div class="t" style="top:485px;font-size:10.4px;color:#1F1F1F;left:1345px;">Bestellartikel</div>
<div class="r" style="left:186px;top:540px;width:1229px;height:1px;background:#EAEAEA;"></div>
<svg class="r" style="left:201px;top:513px;" width="17" height="13" viewBox="0 0 17 13"><path d="M0.6 5.4 L3.5 2.4 L6.8 5.8 L13.1 0.2 L15.9 2.9 L6.9 11.6 Z" fill="#B3C700" stroke="#4F7A86" stroke-width="0.9" stroke-linejoin="round"/></svg>
<div class="t" style="top:515px;font-size:10.4px;color:#1F1F1F;left:333px;">6</div>
<div class="t" style="top:515px;font-size:10.4px;color:#1F1F1F;right:1000.5px;">1.00</div>
<div class="t" style="top:515px;font-size:10.4px;color:#1F1F1F;left:137.5px;width:600px;text-align:center;">R</div>
<div class="t" style="top:515px;font-size:10.4px;color:#1F1F1F;left:462px;">U60</div>
<div class="t" style="top:515px;font-size:10.4px;color:#1F1F1F;left:548px;">Unterschrank</div>
<div class="t" style="top:528px;font-size:10.4px;color:#1F1F1F;left:548px;">1 Drehtür, 2 verst. Fachböden</div>
<div class="t" style="top:515px;font-size:10.4px;color:#1F1F1F;right:604.5px;">242.00</div>
<div class="t" style="top:515px;font-size:10.4px;color:#1F1F1F;right:535.5px;">19.00</div>
<div class="t" style="top:515px;font-size:10.4px;color:#1F1F1F;right:417px;">1</div>
<div class="t" style="top:515px;font-size:10.4px;color:#1F1F1F;left:1138px;letter-spacing:0.245px;">TRAINING-100-DE  09/11</div>
<div class="t" style="top:528px;font-size:10.4px;color:#1F1F1F;left:1138px;letter-spacing:0.113px;">28.02.11</div>
<div class="t" style="top:515px;font-size:10.4px;color:#1F1F1F;right:77px;">2.03</div>
<div class="t" style="top:515px;font-size:10.4px;color:#1F1F1F;left:1345px;">Bestellartikel</div>
<div class="r" style="left:186px;top:570px;width:1229px;height:1px;background:#EAEAEA;"></div>
<svg class="r" style="left:201px;top:543px;" width="17" height="13" viewBox="0 0 17 13"><path d="M0.6 5.4 L3.5 2.4 L6.8 5.8 L13.1 0.2 L15.9 2.9 L6.9 11.6 Z" fill="#B3C700" stroke="#4F7A86" stroke-width="0.9" stroke-linejoin="round"/></svg>
<div class="t" style="top:545px;font-size:10.4px;color:#1F1F1F;left:333px;">7</div>
<div class="t" style="top:545px;font-size:10.4px;color:#1F1F1F;right:1000.5px;">1.00</div>
<div class="t" style="top:545px;font-size:10.4px;color:#1F1F1F;left:137.5px;width:600px;text-align:center;">L</div>
<div class="t" style="top:545px;font-size:10.4px;color:#1F1F1F;left:462px;">UEDK90</div>
<div class="t" style="top:545px;font-size:10.4px;color:#1F1F1F;left:548px;">Eck-Unterschrank</div>
<div class="t" style="top:558px;font-size:10.4px;color:#1F1F1F;left:548px;">mit 40 er Drehtür</div>
<div class="t" style="top:545px;font-size:10.4px;color:#1F1F1F;right:604.5px;">777.00</div>
<div class="t" style="top:545px;font-size:10.4px;color:#1F1F1F;right:535.5px;">19.00</div>
<div class="t" style="top:545px;font-size:10.4px;color:#1F1F1F;right:417px;">2</div>
<div class="t" style="top:545px;font-size:10.4px;color:#1F1F1F;left:1138px;letter-spacing:0.245px;">TRAINING-100-DE  09/11</div>
<div class="t" style="top:558px;font-size:10.4px;color:#1F1F1F;left:1138px;letter-spacing:0.113px;">28.02.11</div>
<div class="t" style="top:545px;font-size:10.4px;color:#1F1F1F;right:77px;">2.11</div>
<div class="t" style="top:545px;font-size:10.4px;color:#1F1F1F;left:1345px;">Bestellartikel</div>
<div class="r" style="left:186px;top:600px;width:1229px;height:1px;background:#EAEAEA;"></div>
<svg class="r" style="left:201px;top:573px;" width="17" height="13" viewBox="0 0 17 13"><path d="M0.6 5.4 L3.5 2.4 L6.8 5.8 L13.1 0.2 L15.9 2.9 L6.9 11.6 Z" fill="#B3C700" stroke="#4F7A86" stroke-width="0.9" stroke-linejoin="round"/></svg>
<svg class="r" style="left:255px;top:574px;" width="6" height="6" viewBox="0 0 6 6"><path d="M0 5 L5 0 L5 5 Z" fill="#555"/></svg>
<div class="t" style="top:575px;font-size:10.4px;color:#1F1F1F;left:333px;">8</div>
<div class="t" style="top:575px;font-size:10.4px;color:#1F1F1F;right:1000.5px;">1.00</div>
<div class="t" style="top:575px;font-size:10.4px;color:#1F1F1F;left:462px;">GSB60</div>
<div class="t" style="top:575px;font-size:10.4px;color:#1F1F1F;left:548px;">Frontplatte</div>
<div class="t" style="top:588px;font-size:10.4px;color:#1F1F1F;left:548px;">für integr. Geschirrspüler</div>
<div class="t" style="top:575px;font-size:10.4px;color:#1F1F1F;right:604.5px;">119.00</div>
<div class="t" style="top:575px;font-size:10.4px;color:#1F1F1F;right:535.5px;">19.00</div>
<div class="t" style="top:575px;font-size:10.4px;color:#1F1F1F;right:417px;">2</div>
<div class="t" style="top:575px;font-size:10.4px;color:#1F1F1F;left:1138px;letter-spacing:0.245px;">TRAINING-100-DE  09/11</div>
<div class="t" style="top:588px;font-size:10.4px;color:#1F1F1F;left:1138px;letter-spacing:0.113px;">28.02.11</div>
<div class="t" style="top:575px;font-size:10.4px;color:#1F1F1F;right:77px;">2.17</div>
<div class="t" style="top:575px;font-size:10.4px;color:#1F1F1F;left:1345px;">Bestellartikel</div>
<div class="r" style="left:186px;top:630px;width:1229px;height:1px;background:#EAEAEA;"></div>
<svg class="r" style="left:201px;top:603px;" width="17" height="13" viewBox="0 0 17 13"><path d="M0.6 5.4 L3.5 2.4 L6.8 5.8 L13.1 0.2 L15.9 2.9 L6.9 11.6 Z" fill="#B3C700" stroke="#4F7A86" stroke-width="0.9" stroke-linejoin="round"/></svg>
<div class="t" style="top:605px;font-size:10.4px;color:#1F1F1F;left:333px;">8.1</div>
<div class="t" style="top:605px;font-size:10.4px;color:#1F1F1F;right:1000.5px;">1.00</div>
<div class="t" style="top:605px;font-size:10.4px;color:#1F1F1F;left:462px;">SMI68M35EU</div>
<div class="t" style="top:605px;font-size:10.4px;color:#1F1F1F;left:548px;">Geschirrspüler 60 cm</div>
<div class="t" style="top:618px;font-size:10.4px;color:#1F1F1F;left:548px;">ActiveWater, Blende Edelstahl</div>
<div class="t" style="top:605px;font-size:10.4px;color:#1F1F1F;right:604.5px;">2304.00</div>
<div class="t" style="top:605px;font-size:10.4px;color:#1F1F1F;right:535.5px;">19.00</div>
<div class="t" style="top:605px;font-size:10.4px;color:#1F1F1F;right:417px;">2</div>
<div class="t" style="top:605px;font-size:10.4px;color:#1F1F1F;left:1006px;">Spezielle Einbauhinweise</div>
<div class="t" style="top:618px;font-size:10.4px;color:#1F1F1F;left:1006px;">beachten!</div>
<div class="t" style="top:605px;font-size:10.4px;color:#1F1F1F;left:1138px;letter-spacing:0.245px;">TRAINING-001-DE  46/11</div>
<div class="t" style="top:618px;font-size:10.4px;color:#1F1F1F;left:1138px;letter-spacing:0.113px;">20.11.12</div>
<div class="t" style="top:605px;font-size:10.4px;color:#1F1F1F;left:1345px;">Bestellartikel</div>
<div class="r" style="left:232px;top:224px;width:1px;height:405px;background:#EAEAEA;"></div>
<div class="r" style="left:281px;top:224px;width:1px;height:405px;background:#EAEAEA;"></div>
<div class="r" style="left:329px;top:224px;width:1px;height:405px;background:#EAEAEA;"></div>
<div class="r" style="left:369px;top:224px;width:1px;height:405px;background:#EAEAEA;"></div>
<div class="r" style="left:418px;top:224px;width:1px;height:405px;background:#EAEAEA;"></div>
<div class="r" style="left:458px;top:224px;width:1px;height:405px;background:#EAEAEA;"></div>
<div class="r" style="left:544px;top:224px;width:1px;height:405px;background:#EAEAEA;"></div>
<div class="r" style="left:738px;top:224px;width:1px;height:405px;background:#EAEAEA;"></div>
<div class="r" style="left:814px;top:224px;width:1px;height:405px;background:#EAEAEA;"></div>
<div class="r" style="left:883px;top:224px;width:1px;height:405px;background:#EAEAEA;"></div>
<div class="r" style="left:1002px;top:224px;width:1px;height:405px;background:#EAEAEA;"></div>
<div class="r" style="left:1134px;top:224px;width:1px;height:405px;background:#EAEAEA;"></div>
<div class="r" style="left:1283px;top:224px;width:1px;height:405px;background:#EAEAEA;"></div>
<div class="r" style="left:1341px;top:224px;width:1px;height:405px;background:#EAEAEA;"></div>
<svg class="r" style="left:893px;top:137px;filter:drop-shadow(3px 4px 2.5px rgba(0,0,0,0.6));" width="250" height="250" viewBox="0 0 250 250"><circle cx="120" cy="120" r="97.8" fill="none" stroke="#FF0000" stroke-width="4.6"/></svg>
<svg class="r" style="left:727.5px;top:35.5px;" width="12" height="14" viewBox="0 0 12 14"><path d="M3.8 9.6 Q0.9 7.6 1 4.9 Q1.3 0.9 5.5 0.8 Q9.7 0.9 10 4.9 Q10.1 7.6 7.2 9.6 V11.6 Q7.2 12.4 5.5 12.4 Q3.8 12.4 3.8 11.6 Z" fill="none" stroke="#D0D8E0" stroke-width="1.1"/><path d="M4 10.5 H7" stroke="#D0D8E0" stroke-width="0.8"/></svg>
<svg class="r" style="left:184px;top:159px;" width="17" height="17" viewBox="0 0 17 17"><path d="M0.5 0.5 H15.5 V10 L12.5 12 L10 14.5 L7 15.5 H0.5 Z" fill="#fff" stroke="#123" stroke-width="0.8"/><path d="M15.8 1 V10.5 L12.8 12.5 L10.3 15 L7.3 16 H1" fill="none" stroke="#0A3010" stroke-width="1"/><rect x="3" y="2" width="11" height="2.3" fill="#E94444"/><path d="M3 5 H14.5 M3 9 H14 M3 12 H10" stroke="#55B060" stroke-width="0.9"/></svg>
<svg class="r" style="left:884px;top:185px;" width="16" height="16" viewBox="0 0 16 16"><path d="M2 1.5 L8 7.8" stroke="#000" stroke-width="1.3"/><path d="M7.3 7.5 L10.4 4 L13.7 7.5 L10.4 9.5 Z" fill="#00E8F0" stroke="#111" stroke-width="0.6"/><path d="M8 8 L8.8 11.5" stroke="#000" stroke-width="1"/><circle cx="8.8" cy="13" r="1.5" fill="none" stroke="#000" stroke-width="1"/></svg>
<svg class="r" style="left:1005px;top:186px;" width="12" height="15" viewBox="0 0 12 15"><path d="M1 2.8 H3 V1.8 H4.5 V0.5 H11 V3 H1 Z" fill="#707070"/><rect x="5" y="3" width="1.4" height="11" fill="#8B0000"/><rect x="6.4" y="3" width="1.8" height="11" fill="#8A8A00"/></svg>
</body></html>
